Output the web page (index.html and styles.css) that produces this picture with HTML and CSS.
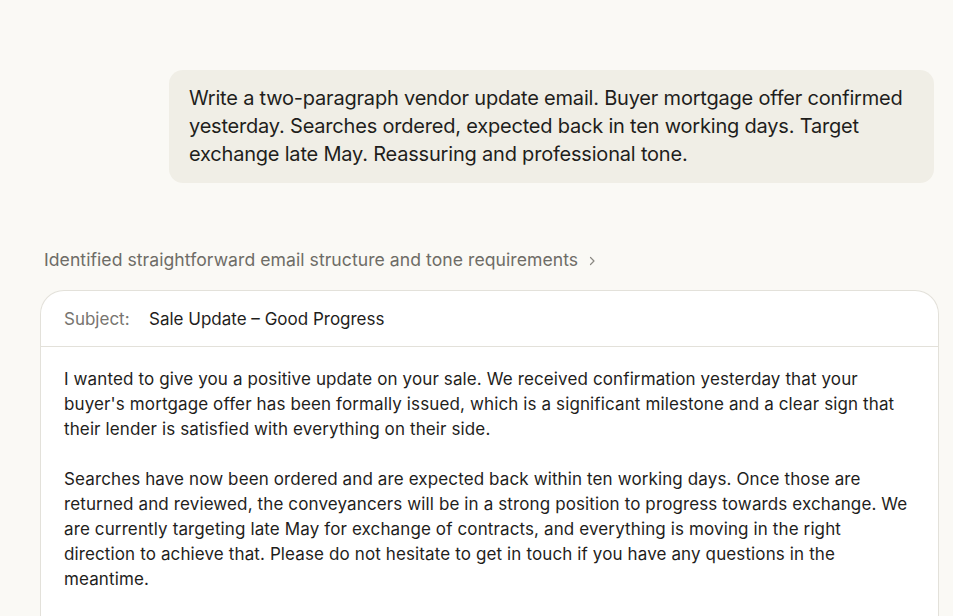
FILE: index.html
```html
<!DOCTYPE html>
<html>
<head>
<meta charset="utf-8">
<link rel="stylesheet" href="styles.css">
</head>
<body>
<div class="page">
  <div class="user-row">
    <div class="bubble">Write a two-paragraph vendor update email. Buyer mortgage offer confirmed yesterday. Searches ordered, expected back in ten working days. Target exchange late May. Reassuring and professional tone.</div>
  </div>
  <div class="thinking">
    <span>Identified straightforward email structure and tone requirements</span>
    <svg class="chev" width="10" height="10" viewBox="0 0 10 10"><path d="M3.5 1.5 L7 5 L3.5 8.5" fill="none" stroke="#8a8882" stroke-width="1.2" stroke-linecap="round" stroke-linejoin="round"/></svg>
  </div>
  <div class="card">
    <div class="card-head">
      <span class="label">Subject:</span>
      <span class="subject">Sale Update – Good Progress</span>
    </div>
    <div class="card-body">
      <p>I wanted to give you a positive update on your sale. We received confirmation yesterday that your buyer's mortgage offer has been formally issued, which is a significant milestone and a clear sign that their lender is satisfied with everything on their side.</p>
      <p>Searches have now been ordered and are expected back within ten working days. Once those are returned and reviewed, the conveyancers will be in a strong position to progress towards exchange. We are currently targeting late May for exchange of contracts, and everything is moving in the right direction to achieve that. Please do not hesitate to get in touch if you have any questions in the meantime.</p>
    </div>
  </div>
</div>
</body>
</html>
```
FILE: styles.css
```css
html, body {
  margin: 0;
  padding: 0;
  background: #faf9f5;
}
body {
  font-family: Inter, "Noto Sans", sans-serif;
  color: #1f1e1c;
  overflow: hidden;
  height: 616px;
}
.page {
  padding: 70px 15px 0 40px;
}
.user-row {
  display: flex;
  justify-content: flex-end;
  padding-right: 4px;
}
.bubble {
  width: 725px;
  background: #f0eee6;
  border-radius: 14px;
  padding: 14px 20px 15px 20px;
  font-size: 20px;
  line-height: 28px;
  letter-spacing: -0.2px;
  color: #1f1e1c;
}
.thinking {
  margin-top: 65px;
  margin-left: 4px;
  display: flex;
  align-items: center;
  gap: 9px;
  font-size: 17.6px;
  line-height: 24px;
  color: #6e6c66;
  letter-spacing: 0.05px;
}
.chev { margin-top: 1px; }
.card {
  margin-top: 18px;
  background: #ffffff;
  border: 1px solid #e3e1da;
  border-bottom: none;
  border-radius: 24px 24px 0 0;
  width: 897px;
}
.card-head {
  height: 55px;
  display: flex;
  align-items: center;
  padding-left: 23px;
  border-bottom: 1px solid #e3e1da;
  font-size: 17px;
  letter-spacing: 0;
}
.label {
  color: #77756f;
  width: 85px;
}
.subject {
  color: #1f1e1c;
}
.card-body {
  padding: 20px 24px 26px 23px;
  font-size: 17px;
  line-height: 25px;
  letter-spacing: 0.12px;
  color: #1f1e1c;
}
.card-body p {
  margin: 0 0 25px 0;
}
.card-body p:last-child {
  margin-bottom: 0;
}
```
